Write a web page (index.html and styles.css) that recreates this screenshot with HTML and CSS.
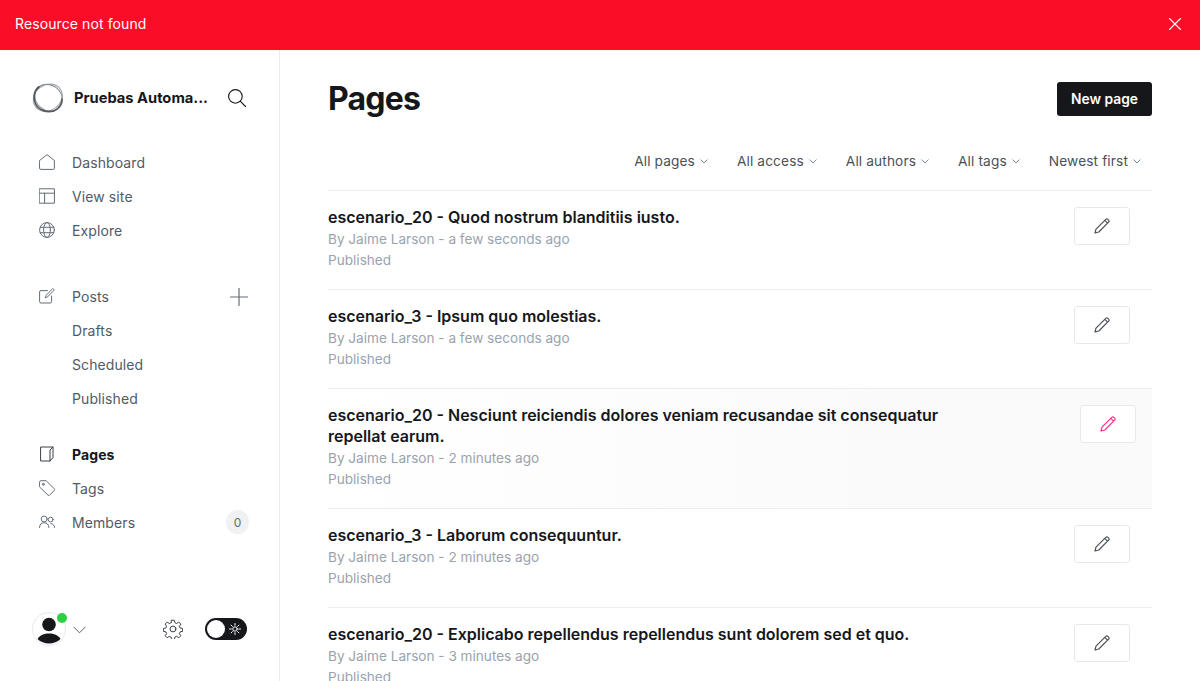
FILE: index.html
```html
<!DOCTYPE html>
<html lang="en">
<head>
    <title>Pages</title>
    <link rel="stylesheet" href="styles.css">
</head>
<body>
    <div class="alert">
        <span>Resource not found</span>
        <svg class="alert-close" viewBox="0 0 12 12"><path d="M.5.5l11 11M11.500.5l-11 11"/></svg>
    </div>

    <div class="layout">
        <nav class="sidebar">
            <div class="brand">
                <svg class="brand-logo" viewBox="0 0 32 32">
                    <ellipse cx="16" cy="15.600" rx="15.200" ry="12.800" transform="rotate(-35 16 16)" class="ring-c"/>
                    <ellipse cx="16.400" cy="15.400" rx="14.600" ry="12.600" transform="rotate(40 16 16)" class="ring-b"/>
                    <path d="M7 4.800C2 8.500.8 16 3.400 21.500 6.500 28.500 15 31 22 28.800" class="ring-a"/>
                    <path d="M22 28.800c5-2.500 8-7 7.800-11.800" class="ring-a ring-thin"/>
                </svg>
                <span class="brand-name">Pruebas Automa...</span>
                <svg class="search-icon" viewBox="0 0 18 18"><circle cx="7.400" cy="7.400" r="6.800"/><path d="M12.200 12.200l5.300 5.300"/></svg>
            </div>

            <ul class="menu">
                <li>
                    <svg viewBox="0 0 16 16"><path d="M.6 6.500L8 .6l7.400 5.900v7.900a1 1 0 0 1-1 1H1.600a1 1 0 0 1-1-1z"/></svg>
                    Dashboard
                </li>
                <li>
                    <svg viewBox="0 0 16 16"><path d="M.6.8h14.800v14.400H.6zM.6 5.200h14.800M5.600 5.200v10"/></svg>
                    View site
                </li>
                <li>
                    <svg viewBox="0 0 16 16"><circle cx="8" cy="8" r="7.400"/><ellipse cx="8" cy="8" rx="3.400" ry="7.400"/><path d="M1.300 5.300h13.400M1.300 10.700h13.400"/></svg>
                    Explore
                </li>
            </ul>

            <ul class="menu menu-posts">
                <li>
                    <svg viewBox="0 0 16 16"><path d="M8.500 2.600H2a1.400 1.400 0 0 0-1.400 1.400v9.600A1.400 1.400 0 0 0 2 15h9.200a1.400 1.400 0 0 0 1.400-1.400V8"/><path d="M14 .8l1.300 1.300-7 7-2 .7.700-2z"/></svg>
                    Posts
                    <svg class="plus-icon" viewBox="0 0 18 18"><path d="M9 .5v17M.5 9h17"/></svg>
                </li>
                <li class="sub">Drafts</li>
                <li class="sub">Scheduled</li>
                <li class="sub">Published</li>
            </ul>

            <ul class="menu">
                <li class="active">
                    <svg viewBox="0 0 16 16"><path d="M2 1h12v10.500L11 15H2zM11 15V4l3-3"/></svg>
                    Pages
                </li>
                <li>
                    <svg viewBox="0 0 16 16"><path d="M.6 1.900a1.200 1.200 0 0 1 1.200-1.200h5.400l8.100 8.100a1.200 1.200 0 0 1 0 1.700l-4.600 4.600a1.200 1.200 0 0 1-1.700 0L.6 7z"/><circle cx="4.300" cy="4.300" r="1"/></svg>
                    Tags
                </li>
                <li>
                    <svg viewBox="0 0 16 16"><circle cx="5.200" cy="5" r="3"/><path d="M.5 13.500c0-3 2-4.800 4.700-4.800s4.700 1.800 4.700 4.800"/><circle cx="11.700" cy="5.600" r="2.400"/><path d="M12 9.600c2 .1 3.500 1.600 3.500 3.900"/></svg>
                    Members
                    <span class="count">0</span>
                </li>
            </ul>

            <div class="sidebar-foot">
                <div class="avatar">
                    <svg viewBox="0 0 32 32"><circle cx="16" cy="11.500" r="6.800"/><path d="M4.500 26c2.500-4 6.500-5.500 11.500-5.500s9 1.500 11.500 5.500c-3 2.800-7 4.500-11.500 4.500S7.500 28.800 4.500 26z"/></svg>
                    <span class="status-dot"></span>
                </div>
                <svg class="foot-caret" viewBox="0 0 14 8"><path d="M1 1l6 6 6-6"/></svg>
                <svg class="gear-icon" viewBox="0 0 24 24"><path d="M10.300 1.500h3.400l.6 3 2.100.9 2.600-1.700 2.400 2.400-1.700 2.600.9 2.100 3 .6v3.400l-3 .6-.9 2.100 1.700 2.600-2.400 2.400-2.600-1.700-2.100.9-.6 3h-3.400l-.6-3-2.100-.9-2.600 1.700-2.400-2.400 1.700-2.600-.9-2.100-3-.6v-3.400l3-.6.9-2.100-1.700-2.600 2.400-2.400 2.600 1.700 2.100-.9z"/><circle cx="12" cy="12" r="3.500"/></svg>
                <div class="theme-toggle">
                    <span class="toggle-knob"></span>
                    <svg class="sun-icon" viewBox="0 0 12 12"><circle cx="6" cy="6" r="2.200"/><path d="M6 .5v1.800M6 9.700v1.800M.5 6h1.800M9.700 6h1.800M2.100 2.100l1.300 1.300M8.600 8.600l1.300 1.300M2.100 9.900l1.300-1.300M8.600 3.400l1.300-1.300"/></svg>
                </div>
            </div>
        </nav>

        <main class="content">
            <header class="page-head">
                <h1>Pages</h1>
                <button class="new-btn">New page</button>
            </header>

            <div class="filters">
                <span>All pages <svg viewBox="0 0 8 5"><path d="M.8.8L4 4l3.200-3.200"/></svg></span>
                <span>All access <svg viewBox="0 0 8 5"><path d="M.8.8L4 4l3.200-3.200"/></svg></span>
                <span>All authors <svg viewBox="0 0 8 5"><path d="M.8.8L4 4l3.200-3.200"/></svg></span>
                <span>All tags <svg viewBox="0 0 8 5"><path d="M.8.8L4 4l3.200-3.200"/></svg></span>
                <span>Newest first <svg viewBox="0 0 8 5"><path d="M.8.8L4 4l3.200-3.200"/></svg></span>
            </div>

            <div class="page-list">
                <div class="page-row">
                    <div class="page-info">
                        <h3>escenario_20 - Quod nostrum blanditiis iusto.</h3>
                        <p>By Jaime Larson - a few seconds ago</p>
                        <p>Published</p>
                    </div>
                    <button class="edit-btn"><svg viewBox="0 0 16 16"><path d="M1 15l1-3.800L11.800 1.400a1.500 1.500 0 0 1 2.100 0l.7.700a1.500 1.500 0 0 1 0 2.100L4.800 14zM10.800 2.400l2.800 2.800"/></svg></button>
                </div>
                <div class="page-row">
                    <div class="page-info">
                        <h3>escenario_3 - Ipsum quo molestias.</h3>
                        <p>By Jaime Larson - a few seconds ago</p>
                        <p>Published</p>
                    </div>
                    <button class="edit-btn"><svg viewBox="0 0 16 16"><path d="M1 15l1-3.800L11.800 1.400a1.500 1.500 0 0 1 2.100 0l.7.700a1.500 1.500 0 0 1 0 2.100L4.800 14zM10.800 2.400l2.800 2.800"/></svg></button>
                </div>
                <div class="page-row hovered">
                    <div class="page-info">
                        <h3>escenario_20 - Nesciunt reiciendis dolores veniam recusandae sit consequatur repellat earum.</h3>
                        <p>By Jaime Larson - 2 minutes ago</p>
                        <p>Published</p>
                    </div>
                    <button class="edit-btn"><svg viewBox="0 0 16 16"><path d="M1 15l1-3.800L11.800 1.400a1.500 1.500 0 0 1 2.100 0l.7.700a1.500 1.500 0 0 1 0 2.100L4.800 14zM10.800 2.400l2.800 2.800"/></svg></button>
                </div>
                <div class="page-row">
                    <div class="page-info">
                        <h3>escenario_3 - Laborum consequuntur.</h3>
                        <p>By Jaime Larson - 2 minutes ago</p>
                        <p>Published</p>
                    </div>
                    <button class="edit-btn"><svg viewBox="0 0 16 16"><path d="M1 15l1-3.800L11.800 1.400a1.500 1.500 0 0 1 2.100 0l.7.700a1.500 1.500 0 0 1 0 2.100L4.800 14zM10.800 2.400l2.800 2.800"/></svg></button>
                </div>
                <div class="page-row">
                    <div class="page-info">
                        <h3>escenario_20 - Explicabo repellendus repellendus sunt dolorem sed et quo.</h3>
                        <p>By Jaime Larson - 3 minutes ago</p>
                        <p>Published</p>
                    </div>
                    <button class="edit-btn"><svg viewBox="0 0 16 16"><path d="M1 15l1-3.800L11.800 1.400a1.500 1.500 0 0 1 2.100 0l.7.700a1.500 1.500 0 0 1 0 2.100L4.800 14zM10.800 2.400l2.800 2.800"/></svg></button>
                </div>
            </div>
        </main>
    </div>
</body>
</html>
```

FILE: styles.css
```css
* {
    box-sizing: border-box;
}
body {
    margin: 0;
    height: 100vh;
    overflow: hidden;
    display: flex;
    flex-direction: column;
    background-color: #fff;
    color: #15171a;
    font-family: Inter, "Liberation Sans", sans-serif;
}
svg {
    fill: none;
    stroke-linecap: round;
    stroke-linejoin: round;
}

/* top alert */
.alert {
    height: 50px;
    flex-shrink: 0;
    display: flex;
    align-items: center;
    justify-content: space-between;
    padding: 0 19px 3px 15px;
    background-color: #f90d27;
    color: #fff;
    font-size: 14px;
    letter-spacing: .1px;
}
.alert-close {
    width: 12px;
    height: 12px;
    stroke: #fff;
    stroke-width: 1.100;
}

.layout {
    flex: 1;
    display: flex;
    min-height: 0;
}

/* sidebar */
.sidebar {
    width: 280px;
    flex-shrink: 0;
    display: flex;
    flex-direction: column;
    padding: 32px 30px 0 32px;
    border-right: 1px solid #ebeef0;
}
.brand {
    display: flex;
    align-items: center;
    height: 32px;
    margin-bottom: 31px;
}
.brand-logo {
    width: 32px;
    height: 32px;
    flex-shrink: 0;
    margin-right: 10px;
    overflow: visible;
}
.ring-a {
    stroke: #55595d;
    stroke-width: 1.700;
}
.ring-thin {
    stroke-width: 1.300;
}
.ring-b {
    stroke: #8a9095;
    stroke-width: 1.100;
}
.ring-c {
    stroke: #a5aaae;
    stroke-width: 1.100;
}
.brand-name {
    flex: 1;
    font-size: 14.700px;
    font-weight: 700;
    white-space: nowrap;
}
.search-icon {
    width: 18px;
    height: 18px;
    margin-right: 3px;
    stroke: #15171a;
    stroke-width: 1.100;
}
.menu {
    list-style: none;
    margin: 0 0 32px 0;
    padding: 0;
}
.menu-posts {
    margin-bottom: 22px;
}
.menu li {
    height: 34px;
    display: flex;
    align-items: center;
    font-size: 14px;
    letter-spacing: .1px;
    color: #525a65;
}
.menu li > svg:first-child {
    width: 16px;
    height: 16px;
    margin: 0 17px 0 7px;
    flex-shrink: 0;
    stroke: #626d79;
    stroke-width: 1;
}
.menu li.sub {
    padding-left: 40px;
}
.menu li.active {
    color: #15171a;
    font-weight: 700;
}
.menu li.active > svg:first-child {
    stroke: #394047;
}
.plus-icon {
    width: 18px;
    height: 18px;
    margin: 1px 1px 0 auto;
    stroke: #626d79;
    stroke-width: 1.200;
}
.count {
    width: 23px;
    height: 24px;
    margin-left: auto;
    display: flex;
    align-items: center;
    justify-content: center;
    border-radius: 12px;
    background-color: #eff1f3;
    font-size: 12px;
    color: #626d79;
}
.sidebar-foot {
    margin-top: auto;
    height: 36px;
    margin-bottom: 34px;
    display: flex;
    align-items: center;
}
.avatar {
    position: relative;
    width: 34px;
    height: 34px;
    border-radius: 50%;
    border: 1px solid #e8eaec;
}
.avatar svg {
    display: block;
    width: 32px;
    height: 32px;
    fill: #15171a;
}
.status-dot {
    position: absolute;
    top: 0;
    right: -2px;
    width: 10px;
    height: 10px;
    border-radius: 50%;
    background-color: #30cf43;
}
.foot-caret {
    width: 13px;
    height: 8px;
    margin-left: 7px;
    margin-top: 2px;
    stroke: #4b5563;
    stroke-width: 1;
}
.gear-icon {
    width: 20px;
    height: 20px;
    margin-left: auto;
    margin-right: 22px;
    stroke: #394047;
    stroke-width: 1.200;
}
.theme-toggle {
    width: 42px;
    height: 22px;
    margin-right: 2px;
    padding: 2px 6px 2px 2px;
    display: flex;
    align-items: center;
    justify-content: space-between;
    border-radius: 11px;
    background-color: #15171a;
}
.toggle-knob {
    width: 18px;
    height: 18px;
    border-radius: 50%;
    background-color: #fff;
}
.sun-icon {
    width: 12px;
    height: 12px;
    stroke: #fff;
    stroke-width: 1;
}

/* main column */
.content {
    flex: 1;
    min-width: 0;
    padding: 32px 48px 0 48px;
}
.page-head {
    display: flex;
    align-items: center;
    justify-content: space-between;
    height: 34px;
}
h1 {
    margin: 0 0 2px 0;
    font-size: 32px;
    font-weight: 700;
    letter-spacing: -.8px;
}
.new-btn {
    height: 34px;
    width: 95px;
    border: none;
    border-radius: 3px;
    background-color: #15171a;
    color: #fff;
    font-family: inherit;
    font-size: 13.800px;
    font-weight: 600;
}
.filters {
    height: 74px;
    padding: 35px 11px 0 0;
    display: flex;
    justify-content: flex-end;
    gap: 29px;
    font-size: 13.700px;
    letter-spacing: .12px;
    color: #4a5159;
}
.filters span {
    display: flex;
    align-items: center;
    height: 20px;
    gap: 5px;
}
.filters svg {
    width: 8px;
    height: 5px;
    stroke: #7c8b9a;
    stroke-width: 1;
}
.page-row {
    display: flex;
    justify-content: space-between;
    align-items: flex-start;
    padding: 16px 22px 0 0;
    border-top: 1px solid #ebeef0;
    min-height: 99px;
}
.page-row.hovered {
    padding-right: 16px;
    min-height: 120px;
    background: linear-gradient(90deg, #fff 0%, #fafafa 70%);
}
.page-info {
    width: 640px;
}
h3 {
    margin: 0 0 1px 0;
    font-size: 16px;
    line-height: 21px;
    font-weight: 600;
}
.page-info p {
    margin: 0;
    font-size: 13.600px;
    line-height: 21px;
    color: #99a3ae;
}
.edit-btn {
    width: 56px;
    height: 38px;
    display: flex;
    align-items: center;
    justify-content: center;
    border: 1px solid #e6e9eb;
    border-radius: 3px;
    background-color: #fff;
}
.edit-btn svg {
    width: 16px;
    height: 16px;
    stroke: #4a5159;
    stroke-width: 1.200;
}
.hovered .edit-btn svg {
    stroke: #fb2d8d;
}
```
